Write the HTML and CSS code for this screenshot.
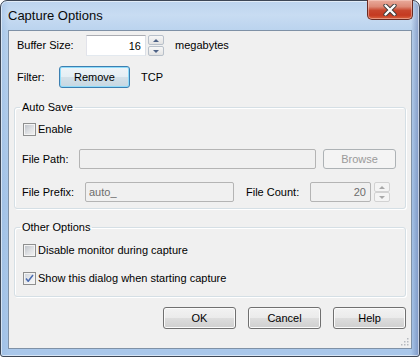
FILE: index.html
```html
<!DOCTYPE html>
<html lang="en">
<head>
    <meta charset="UTF-8">
    <title>Capture Options</title>
    <link rel="stylesheet" href="styles.css">
</head>
<body>

    <div class="window">
        <div class="titlebar">
            <span class="title">Capture Options</span>
            <button class="close-btn">
                <svg width="14" height="12" viewBox="0 0 14 12">
                    <path d="M2.5 1.5 L11.5 10.5 M11.5 1.5 L2.5 10.5" stroke="#3b3b3b" stroke-width="4.2" stroke-linecap="round"/>
                    <path d="M2.5 1.5 L11.5 10.5 M11.5 1.5 L2.5 10.5" stroke="#ffffff" stroke-width="2.4" stroke-linecap="round"/>
                </svg>
            </button>
        </div>

        <div class="client">
            <div class="row top-row buffer-row">
                <label class="lbl buffer-lbl">Buffer Size:</label>
                <input class="textbox buffer-box" type="text" value="16">
                <div class="spinner">
                    <span class="spin-btn"><i class="arrow-up"></i></span>
                    <span class="spin-btn"><i class="arrow-down"></i></span>
                </div>
                <span class="unit">megabytes</span>
            </div>

            <div class="row top-row filter-row">
                <label class="lbl filter-lbl">Filter:</label>
                <button class="btn btn-default remove-btn">Remove</button>
                <span class="unit">TCP</span>
            </div>

            <fieldset class="group autosave-group">
                <legend>Auto Save</legend>
                <div class="row check-row first-check">
                    <span class="check"></span>
                    <span>Enable</span>
                </div>
                <div class="row field-row">
                    <label class="lbl path-lbl">File Path:</label>
                    <input class="textbox disabled path-box" type="text" disabled>
                    <button class="btn btn-disabled browse-btn" disabled>Browse</button>
                </div>
                <div class="row field-row">
                    <label class="lbl prefix-lbl">File Prefix:</label>
                    <input class="textbox disabled prefix-box" type="text" value="auto_" disabled>
                    <label class="lbl count-lbl">File Count:</label>
                    <input class="textbox disabled count-box" type="text" value="20" disabled>
                    <div class="spinner spinner-off">
                        <span class="spin-btn"><i class="arrow-up"></i></span>
                        <span class="spin-btn"><i class="arrow-down"></i></span>
                    </div>
                </div>
            </fieldset>

            <fieldset class="group other-group">
                <legend>Other Options</legend>
                <div class="row check-row first-check">
                    <span class="check"></span>
                    <span>Disable monitor during capture</span>
                </div>
                <div class="row check-row second-check">
                    <span class="check checked">
                        <svg width="11" height="11" viewBox="0 0 11 11">
                            <path d="M2 5.5 L4.2 8.3 L9 2" fill="none" stroke="#4a6bb0" stroke-width="1.5" stroke-linejoin="round"/>
                        </svg>
                    </span>
                    <span>Show this dialog when starting capture</span>
                </div>
            </fieldset>

            <div class="row button-row">
                <button class="btn dialog-btn">OK</button>
                <button class="btn dialog-btn">Cancel</button>
                <button class="btn dialog-btn">Help</button>
            </div>

            <!-- size grip -->
            <svg class="grip" width="9" height="9" viewBox="0 0 9 9">
                <rect x="7" y="1" width="1.5" height="1.5" fill="#b5b9bf"/>
                <rect x="7" y="4" width="1.5" height="1.5" fill="#b5b9bf"/>
                <rect x="4" y="4" width="1.5" height="1.5" fill="#b5b9bf"/>
                <rect x="7" y="7" width="1.5" height="1.5" fill="#b5b9bf"/>
                <rect x="4" y="7" width="1.5" height="1.5" fill="#b5b9bf"/>
                <rect x="1" y="7" width="1.5" height="1.5" fill="#b5b9bf"/>
            </svg>
        </div>
    </div>

</body>
</html>
```

FILE: styles.css
```css
body {
    margin: 0;
    font-family: "Liberation Sans", Arial, sans-serif;
    font-size: 11px;
    line-height: 13px;
    color: #000;
}

.window {
    width: 420px;
    height: 357px;
    box-sizing: border-box;
    display: flex;
    flex-direction: column;
    padding: 0 7px 7px 7px;
    border: 1px solid #3d4756;
    border-radius: 7px 7px 3px 3px;
    background:
        linear-gradient(90deg, rgba(150, 185, 225, .5) 0, rgba(255, 255, 255, 0) 8px, rgba(255, 255, 255, 0) 410px, rgba(70, 90, 150, .5) 419px),
        linear-gradient(#bcd4ee 0, #c8dcf2 14px, #bad3ee 30px, #aac8ea 200px, #a9c7ea 100%);
    box-shadow: inset 0 0 0 1px rgba(255, 255, 255, .55);
}

.titlebar {
    height: 29px;
    display: flex;
    justify-content: space-between;
    align-items: flex-start;
}

.title {
    font-size: 13px;
    line-height: 15px;
    padding-top: 7px;
    color: #0a0a0a;
}

.close-btn {
    width: 46px;
    height: 20px;
    margin-top: -1px;
    margin-right: -1px;
    padding: 0;
    display: flex;
    align-items: center;
    justify-content: center;
    border: 1px solid #6a2b22;
    border-top: none;
    border-radius: 0 0 5px 5px;
    background: linear-gradient(#e9ab9c 0, #dd8a77 35%, #c8462d 55%, #c53a21 80%, #d9633f 100%);
    box-shadow: inset 0 0 0 1px rgba(255, 220, 210, .45);
}

.client {
    position: relative;
    flex: 1;
    display: flex;
    flex-direction: column;
    padding: 4px 5px 0 5px;
    background: #f0f0f0;
    border: 1px solid #7f91a6;
}

.row {
    display: flex;
    align-items: center;
}

.top-row {
    padding-left: 3px;
}

.buffer-row {
    height: 21px;
}

.filter-row {
    height: 22px;
    margin-top: 10px;
}

.lbl {
    flex: none;
}

.buffer-lbl {
    width: 69px;
}

.filter-lbl {
    width: 42px;
}

.unit {
    margin-left: 11px;
}

/* text boxes */
.textbox {
    box-sizing: border-box;
    height: 100%;
    margin: 0;
    padding: 0 4px;
    font: inherit;
    color: #000;
    background: #fff;
    border: 1px solid;
    border-color: #abadb3 #dbdfe6 #e3e9ef #e2e3ea;
    outline: none;
}

.buffer-box {
    width: 60px;
    text-align: right;
}

.textbox.disabled {
    background: #f0f0f0;
    border-color: #b4b4b4;
    border-radius: 2px;
    color: #6d6d6d;
}

.path-box {
    width: 237px;
}

.prefix-box {
    width: 149px;
    padding-left: 3px;
}

.count-box {
    width: 61px;
    text-align: right;
    color: #6b6b80;
}

/* spinners */
.spinner {
    height: 100%;
    width: 16px;
    margin-left: 2px;
    display: flex;
    flex-direction: column;
    justify-content: space-between;
}

.spin-btn {
    box-sizing: border-box;
    height: 10px;
    display: flex;
    align-items: center;
    justify-content: center;
    border: 1px solid #b8c0ca;
    border-radius: 2px;
    background: linear-gradient(#f7f7f7, #e3e3e3);
}

.arrow-up,
.arrow-down {
    width: 0;
    height: 0;
    border-left: 3px solid transparent;
    border-right: 3px solid transparent;
}

.arrow-up {
    border-bottom: 3px solid #4d6185;
}

.arrow-down {
    border-top: 3px solid #4d6185;
}

.spinner-off {
    margin-left: 3px;
}

.spinner-off .spin-btn {
    border-color: #d2d2d2;
    background: #f4f4f4;
}

.spinner-off .arrow-up {
    border-bottom-color: #a8a8a8;
}

.spinner-off .arrow-down {
    border-top-color: #a8a8a8;
}

/* push buttons */
.btn {
    box-sizing: border-box;
    height: 22px;
    padding: 0;
    font: inherit;
    color: #000;
    border: 1px solid #707070;
    border-radius: 3px;
    background: linear-gradient(#f2f2f2 0%, #ebebeb 48%, #dddddd 52%, #cfcfcf 100%);
    box-shadow: inset 0 0 0 1px #fbfbfb;
}

.btn-default {
    border-color: #3c7fb1;
    background: linear-gradient(#eef4f8 0%, #e4eef4 48%, #d3e0e8 52%, #c6d7e2 100%);
    box-shadow: inset 0 0 0 1px #8fdcfa;
}

.remove-btn {
    width: 71px;
}

.btn-disabled {
    height: 20px;
    color: #9a9a9a;
    border-color: #adb2b5;
    background: #f4f4f4;
    box-shadow: none;
}

.browse-btn {
    width: 73px;
    margin-left: 7px;
}

/* group boxes */
.group {
    margin: 13px 0 0 0;
    padding: 0 6px 7px 7px;
    border: 1px solid #d5dfe5;
    border-radius: 3px;
    box-shadow: 1px 1px 0 #fff, inset 1px 1px 0 #fff;
}

.group legend {
    padding: 0 2px;
    margin-left: -2px;
    line-height: 13px;
}

.autosave-group {
    padding-bottom: 6px;
}

.autosave-group .first-check {
    margin-top: 9px;
}

.other-group {
    margin-top: 12px;
    padding-bottom: 11px;
}

.check-row {
    height: 13px;
}

.first-check {
    margin-top: 10px;
}

.second-check {
    margin-top: 15px;
}

.check {
    box-sizing: border-box;
    width: 13px;
    height: 13px;
    margin: 0 2px 0 1px;
    display: flex;
    align-items: center;
    justify-content: center;
    border: 1px solid #8e8f8f;
    background: linear-gradient(135deg, #b9bec5 0%, #dfe1e4 55%, #f3f3f3 100%);
    box-shadow: inset 0 0 0 1px #f4f4f4;
}

.check.checked {
    background: linear-gradient(135deg, #cdd3db 0%, #eceef1 60%, #f8f8f8 100%);
}

.field-row {
    height: 20px;
    margin-top: 13px;
}

.path-lbl {
    width: 57px;
}

.prefix-lbl {
    width: 63px;
}

.count-lbl {
    width: 64px;
    margin-left: 12px;
}

.button-row {
    height: 22px;
    margin-top: 10px;
    justify-content: flex-end;
    gap: 12px;
}

.dialog-btn {
    width: 73px;
}

.grip {
    position: absolute;
    right: 2px;
    bottom: 2px;
}
```
